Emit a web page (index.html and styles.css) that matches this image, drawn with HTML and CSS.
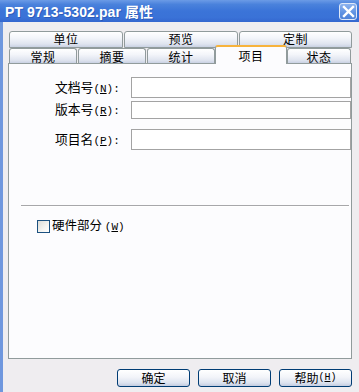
FILE: index.html
```html
<!DOCTYPE html>
<html>
<head>
<meta charset="utf-8">
<link rel="stylesheet" href="styles.css">
</head>
<body>
<div class="window">
  <div class="titlebar">
    <span class="title">PT 9713-5302.par 属性</span>
    <span class="close"><svg width="13" height="13" viewBox="0 0 13 13"><path d="M2 2 L11 11 M11 2 L2 11" stroke="#fff" stroke-width="2.4" stroke-linecap="square"/></svg></span>
  </div>
  <div class="body">
    <div class="tabs">
      <div class="row back">
        <div class="tab t114">单位</div>
        <div class="tab t114">预览</div>
        <div class="tab t113">定制</div>
      </div>
      <div class="row front">
        <div class="tab t69">常规</div>
        <div class="tab t69">摘要</div>
        <div class="tab t68">统计</div>
        <div class="tab sel">项目</div>
        <div class="tab t64">状态</div>
      </div>
    </div>
    <div class="panel">
      <div class="form">
        <label class="lbl">文档号<span class="acc">(<u>N</u>):</span></label><div class="input h21"></div>
        <label class="lbl">版本号<span class="acc">(<u>R</u>):</span></label><div class="input h18"></div>
        <label class="lbl">项目名<span class="acc">(<u>P</u>):</span></label><div class="input h21"></div>
      </div>
      <div class="sep"></div>
      <div class="check"><span class="box"></span><span class="clbl">硬件部分 <span class="acc">(<u>W</u>)</span></span></div>
    </div>
    <div class="buttons">
      <div class="btn">确定</div>
      <div class="btn">取消</div>
      <div class="btn">帮助<span class="bacc">(<u>H</u>)</span></div>
    </div>
  </div>
</div>
</body>
</html>
```

FILE: styles.css
```css
html, body {
  margin: 0;
  padding: 0;
  width: 359px;
  height: 392px;
  overflow: hidden;
  background: #efedf0;
}
.window {
  width: 359px;
  height: 392px;
  display: flex;
  flex-direction: column;
  font-family: "Noto Sans CJK SC", "DejaVu Sans", sans-serif;
  font-size: 12px;
  color: #000;
}
.titlebar {
  height: 22px;
  flex: none;
  display: flex;
  align-items: center;
  justify-content: space-between;
  background: linear-gradient(to bottom, #6b9be6 0%, #4a82dc 20%, #3b74d8 50%, #3a72d7 80%, #3467cf 100%);
  padding: 0 2px 0 5px;
}
.title {
  color: #fff;
  font-family: "Liberation Sans", "Noto Sans CJK SC", sans-serif;
  font-weight: bold;
  font-size: 14px;
  letter-spacing: 0.1px;
  text-shadow: 1px 1px 0 rgba(20, 50, 130, 0.35);
}
.close {
  width: 18px;
  height: 17px;
  box-sizing: border-box;
  border: 1px solid #dfe8f8;
  border-radius: 3px;
  background: linear-gradient(to bottom, #8db3ee, #5f91e2 60%, #4f82d8);
  display: flex;
  align-items: center;
  justify-content: center;
  margin-top: 1px;
}
.body {
  flex: 1;
  display: flex;
  flex-direction: column;
  border-left: 3px solid #6f97de;
  padding: 9px 7px 0 5px;
  background: #efedf0;
}
.tabs {
  display: flex;
  flex-direction: column;
  padding-left: 1px;
}
.row {
  display: flex;
  gap: 1px;
}
.back { height: 17px; }
.front { height: 15px; }
.tab {
  box-sizing: border-box;
  border: 1px solid #919b9c;
  border-bottom: none;
  border-radius: 3px 3px 0 0;
  background: linear-gradient(to bottom, #ffffff 0%, #f3f5fa 40%, #dfe4ef 80%, #c9d1e3 100%);
  display: flex;
  align-items: center;
  justify-content: center;
  line-height: 12px;
  flex: none;
  font-size: 12px;
  letter-spacing: 0.5px;
}
.back .tab {
  border-bottom: 1px solid #919b9c;
  padding-bottom: 1px;
}
.front .tab { padding-top: 1px; }
.t114 { width: 114px; }
.t113 { width: 113px; }
.t69 { width: 68px; }
.t68 { width: 68px; }
.t64 { width: 64px; }
.front .tab.sel {
  width: 72px;
  height: 19px;
  margin-top: -3px;
  margin-bottom: -1px;
  margin-left: -1px;
  margin-right: -1px;
  background: #fcfcfe;
  border-top: 2px solid #f7b33d;
  position: relative;
  z-index: 1;
  padding-top: 0;
}
.panel {
  box-sizing: border-box;
  height: 296px;
  border: 1px solid #919b9c;
  background: #fcfcfe;
  padding: 13px 1px 0 46px;
  display: flex;
  flex-direction: column;
}
.form {
  display: grid;
  grid-template-columns: 69px 220px;
  column-gap: 7px;
  align-items: center;
}
.lbl {
  text-align: left;
  white-space: nowrap;
  line-height: 14px;
  font-size: 12.8px;
}
.acc {
  font-family: "Liberation Mono", "DejaVu Sans Mono", monospace;
  font-size: 11px;
}
.input {
  box-sizing: border-box;
  border: 1px solid #a3a3a3;
  background: #fff;
}
.h21 { height: 21px; }
.h18 { height: 18px; }
.form .input:nth-of-type(2) { margin-top: 3px; }
.form .input:nth-of-type(3) { margin-top: 10px; }
.form .lbl:nth-of-type(2) { margin-top: 3px; }
.form .lbl:nth-of-type(3) { margin-top: 10px; }
.sep {
  margin: 55px 1px 0 -34px;
  border-top: 1px solid #a7a7aa;
  border-bottom: 1px solid #ffffff;
}
.check {
  margin: 11px 0 0 -18px;
  display: flex;
  align-items: center;
  gap: 2px;
  line-height: 13px;
}
.clbl {
  font-size: 12.5px;
  white-space: nowrap;
}
.box {
  width: 13px;
  height: 13px;
  box-sizing: border-box;
  border: 1px solid #1c5180;
  background: linear-gradient(135deg, #dcdcd7, #f4f4f1 60%, #fff);
  flex: none;
}
.buttons {
  display: flex;
  justify-content: flex-end;
  gap: 8px;
  margin-top: 10px;
}
.btn {
  width: 73px;
  height: 18px;
  box-sizing: border-box;
  border: 1px solid #003c74;
  border-radius: 3px;
  background: linear-gradient(to bottom, #ffffff 0%, #f2f4f9 45%, #dde3ef 80%, #c3cce0 100%);
  display: flex;
  align-items: center;
  justify-content: center;
  line-height: 1;
}
.bacc {
  font-family: "Liberation Mono", "DejaVu Sans Mono", monospace;
  font-size: 10px;
}
```
